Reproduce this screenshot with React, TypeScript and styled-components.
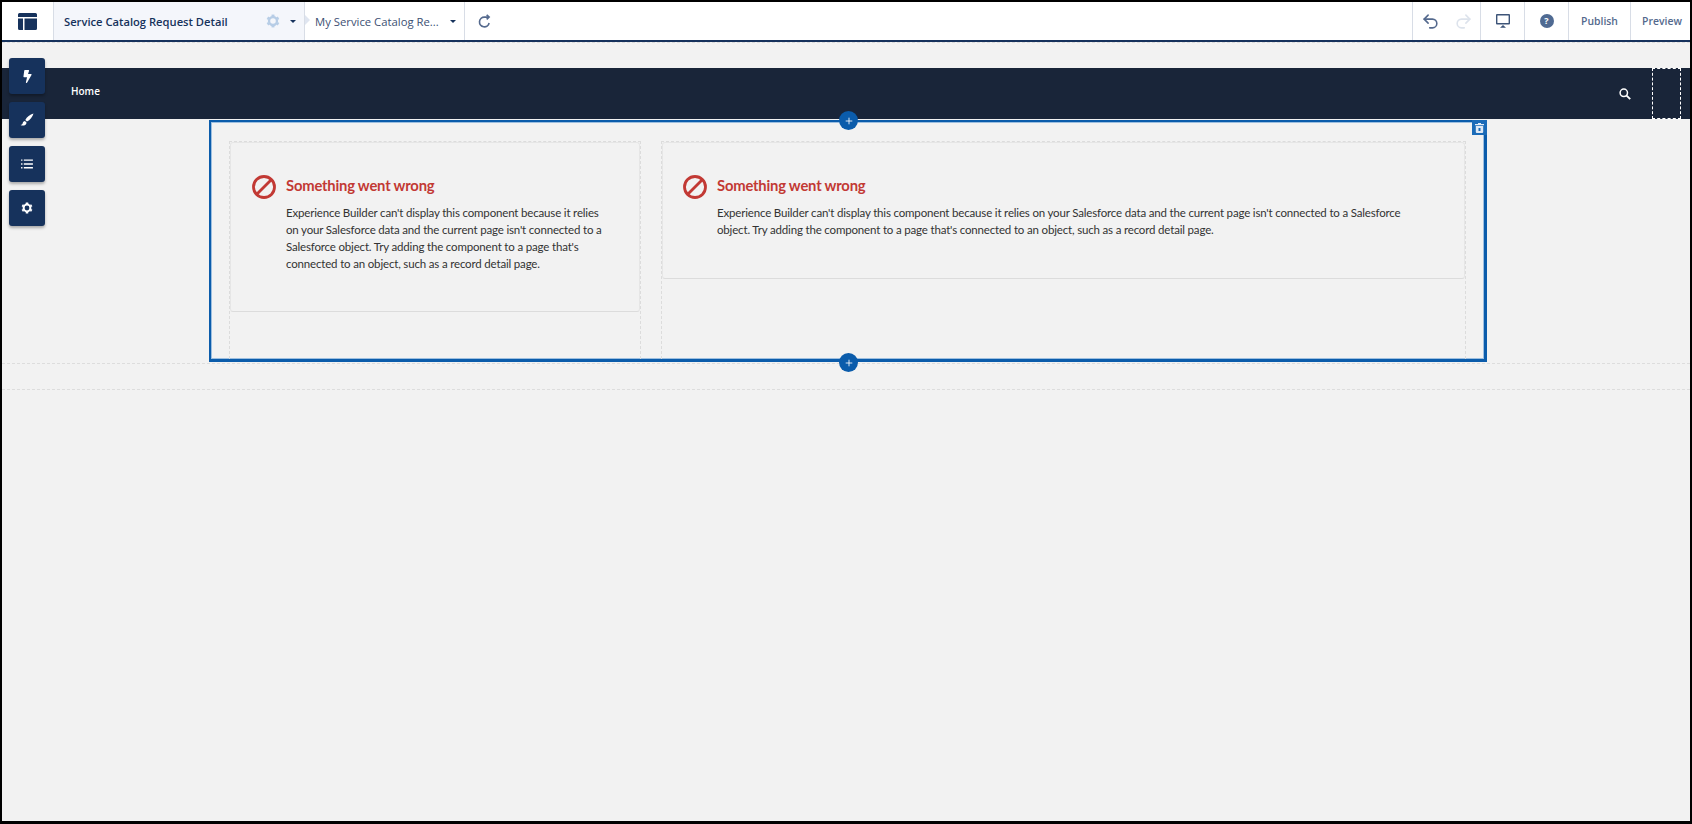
import styled, { createGlobalStyle } from 'styled-components';
import { Plus, Redo2, Undo2 } from 'lucide-react';
import { FaBolt } from 'react-icons/fa';

const GlobalStyle = createGlobalStyle`
  html, body {
    margin: 0;
    padding: 0;
    background: #000;
  }
  * {
    box-sizing: border-box;
  }
`;

const MESSAGE =
  "Experience Builder can't display this component because it relies on your Salesforce data and the current page isn't connected to a Salesforce object. Try adding the component to a page that's connected to an object, such as a record detail page.";

const GEAR_TEETH = [0, 60, 120, 180, 240, 300];

const App = () => (
  <>
    <GlobalStyle />
    <Frame>
      <TopBar>
        <LogoCell>
          <svg width="19" height="17" viewBox="0 0 19 17" aria-hidden="true">
            <path
              d="M1.5 0h16A1.5 1.5 0 0 1 19 1.5V4H0V1.500A1.500 1.500 0 0 1 1.500 0zM0 5.500h5V17H1.500A1.500 1.500 0 0 1 0 15.500zM6.500 5.500H19v10a1.500 1.500 0 0 1-1.500 1.500H6.500z"
              fill="#16325c"
            />
          </svg>
        </LogoCell>
        <PageTab>
          <PageName>Service Catalog Request Detail</PageName>
          <TabGear>
            <GearIcon size={14} color="#b7cde6" />
          </TabGear>
          <Caret />
        </PageTab>
        <SecondTab>
          <SecondName>My Service Catalog Re...</SecondName>
          <Caret />
        </SecondTab>
        <RefreshCell>
          <svg width="13" height="14" viewBox="0 0 15 15" fill="none" stroke="#54698d" strokeWidth="1.900" aria-hidden="true">
            <path d="M12.800 9.800A5.600 5.600 0 1 1 7.500 3h5" />
            <path d="M10 .500 12.800 3 10 5.600" />
          </svg>
        </RefreshCell>
        <Spacer />
        <HistoryCell>
          <Undo2 size={19} strokeWidth={2} color="#54698d" />
          <Redo2 size={19} strokeWidth={2} color="#dde3ec" />
        </HistoryCell>
        <IconCell>
          <svg width="14" height="14" viewBox="0 0 14 14" aria-hidden="true">
            <path
              d="M1 0h12a1 1 0 0 1 1 1v8.500a1 1 0 0 1-1 1H1a1 1 0 0 1-1-1V1a1 1 0 0 1 1-1zm.4 1.400v7.700h11.200V1.400zM7 11l3 2.800H4z"
              fill="#3d5478"
              fillRule="evenodd"
            />
          </svg>
        </IconCell>
        <IconCell>
          <HelpDot>?</HelpDot>
        </IconCell>
        <ActionCell $width={62}>Publish</ActionCell>
        <ActionCell $width={59} $last>
          Preview
        </ActionCell>
      </TopBar>

      <Stage>
        <SideTools>
          <ToolButton>
            <FaBolt size={13} color="#fff" />
          </ToolButton>
          <ToolButton>
            <svg width="14" height="14" viewBox="0 0 14 14" aria-hidden="true">
              <path d="M13.500.500C10 1.500 6.800 4 5.300 7l1.700 1.600C10 7 12.500 4 13.500.500zM4.600 7.900c-1.500.4-1.700 1.500-2 2.500-.2.800-.9 1.300-2.100 1.600 1.800 1 4.600.8 5.600-.9.500-.8.400-1.500.1-2z" fill="#fff" />
            </svg>
          </ToolButton>
          <ToolButton>
            <svg width="12" height="10" viewBox="0 0 13 11" aria-hidden="true">
              <path d="M0 .500h1.500V2H0zM3 .500h10V2H3zM0 4.700h1.500v1.500H0zM3 4.700h10v1.500H3zM0 8.900h1.500v1.500H0zM3 8.900h10v1.500H3z" fill="#fff" />
            </svg>
          </ToolButton>
          <ToolButton>
            <GearIcon size={12} color="#fff" />
          </ToolButton>
        </SideTools>

        <NavBar>
          <NavLink>Home</NavLink>
          <NavEnd>
            <svg width="12" height="12" viewBox="0 0 12 12" fill="none" stroke="#fff" aria-hidden="true">
              <circle cx="4.800" cy="4.800" r="3.700" strokeWidth="1.500" />
              <path d="m7.600 7.600 3.600 3.600" strokeWidth="1.900" />
            </svg>
            <ProfileSlot />
          </NavEnd>
        </NavBar>

        <Section>
          <AddButton $edge="top">
            <Plus size={10} strokeWidth={2} />
          </AddButton>
          <DeleteTab>
            <svg width="9" height="10" viewBox="0 0 9 10" aria-hidden="true">
              <path
                d="M3 0h3v1h3v1.200H0V1h3zM.8 3h7.400v6a1 1 0 0 1-1 1H1.800a1 1 0 0 1-1-1zm2.700 2v3h2V5z"
                fill="#dfe9f5"
                fillRule="evenodd"
              />
            </svg>
          </DeleteTab>
          <Column $width={412}>
            <ErrorCard $height={170} $pad={21}>
              <StopIcon />
              <ErrorText>
                <ErrorTitle>Something went wrong</ErrorTitle>
                <ErrorBody>{MESSAGE}</ErrorBody>
              </ErrorText>
            </ErrorCard>
          </Column>
          <Column $width={805}>
            <ErrorCard $height={137} $pad={20}>
              <StopIcon />
              <ErrorText>
                <ErrorTitle>Something went wrong</ErrorTitle>
                <ErrorBody>{MESSAGE}</ErrorBody>
              </ErrorText>
            </ErrorCard>
          </Column>
          <AddButton $edge="bottom">
            <Plus size={10} strokeWidth={2} />
          </AddButton>
        </Section>

        <EmptyRegion />
      </Stage>
    </Frame>
  </>
);

const GearIcon = ({ size, color }: { size: number; color: string }) => (
  <svg width={size} height={size} viewBox="0 0 24 24" fill="none" stroke={color} aria-hidden="true">
    <circle cx="12" cy="12" r="6.800" strokeWidth="4" />
    {GEAR_TEETH.map((angle) => (
      <path key={angle} d="M12 4V1" strokeWidth="5" transform={`rotate(${angle} 12 12)`} />
    ))}
  </svg>
);

const StopIcon = () => (
  <StopSvg viewBox="0 0 24 24" aria-hidden="true">
    <circle cx="12" cy="12" r="10.500" fill="none" stroke="#c23934" strokeWidth="2.800" />
    <path d="M5 19 19 5" stroke="#c23934" strokeWidth="2.800" />
  </StopSvg>
);

const Frame = styled.div`
  width: 1692px;
  height: 824px;
  border: 2px solid #000;
  border-bottom-width: 3px;
  background: #f2f2f2;
  overflow: hidden;
  display: flex;
  flex-direction: column;
`;

const TopBar = styled.header`
  height: 40px;
  flex: none;
  display: flex;
  align-items: stretch;
  background: #fff;
  border-bottom: 2px solid #16325c;
  font-family: 'Open Sans', 'Liberation Sans', sans-serif;
`;

const Cell = styled.div`
  display: flex;
  align-items: center;
  justify-content: center;
  border-right: 1px solid #d8dde6;
`;

const LogoCell = styled(Cell)`
  width: 52px;
`;

const PageTab = styled(Cell)`
  position: relative;
  width: 251px;
  padding: 0 8px 0 10px;
  background: #f4f6fb;
  justify-content: flex-start;

  &::after {
    content: '';
    position: absolute;
    right: -6px;
    top: 13px;
    border-left: 5px solid #dfe5f0;
    border-top: 5px solid transparent;
    border-bottom: 5px solid transparent;
  }
`;

const PageName = styled.span`
  font-size: 11.200px;
  font-weight: 600;
  color: #16325c;
  white-space: nowrap;
`;

const TabGear = styled.span`
  display: flex;
  margin-left: auto;
  margin-right: 10px;
`;

const Caret = styled.span`
  width: 0;
  height: 0;
  border-top: 3px solid #16325c;
  border-left: 3.500px solid transparent;
  border-right: 3.500px solid transparent;
`;

const SecondTab = styled(Cell)`
  width: 160px;
  padding: 0 8px 0 10px;
  justify-content: space-between;
`;

const SecondName = styled.span`
  font-size: 11.300px;
  color: #3c5073;
  white-space: nowrap;
`;

const RefreshCell = styled.div`
  width: 42px;
  padding-right: 3px;
  display: flex;
  align-items: center;
  justify-content: center;
`;

const Spacer = styled.div`
  flex: 1;
  border-right: 1px solid #d8dde6;
`;

const HistoryCell = styled(Cell)`
  width: 68px;
  gap: 14px;
`;

const IconCell = styled(Cell)`
  width: 44px;
`;

const HelpDot = styled.span`
  width: 14px;
  height: 14px;
  border-radius: 50%;
  background: #4f6a92;
  color: #fff;
  font-size: 9px;
  font-weight: 700;
  line-height: 14px;
  text-align: center;
`;

const ActionCell = styled(Cell)<{ $width: number; $last?: boolean }>`
  width: ${({ $width }) => $width}px;
  padding-left: ${({ $last }) => ($last ? 3 : 0)}px;
  font-size: 10.400px;
  font-weight: 600;
  color: #54698d;
  border-right: ${({ $last }) => ($last ? 'none' : '1px solid #d8dde6')};
`;

const Stage = styled.main`
  position: relative;
  flex: 1;
  padding-top: 25px;
  border-top: 1px dashed #dddddd;
`;

const SideTools = styled.nav`
  position: absolute;
  left: 7px;
  top: 15px;
  z-index: 3;
  display: flex;
  flex-direction: column;
  gap: 8px;
`;

const ToolButton = styled.button`
  width: 36px;
  height: 36px;
  padding: 0;
  border: none;
  border-radius: 3px;
  background: #16325c;
  box-shadow: 0 2px 3px rgba(0, 0, 0, 0.3);
  display: flex;
  align-items: center;
  justify-content: center;
`;

const NavBar = styled.div`
  height: 51px;
  background: #192539;
  display: flex;
  align-items: center;
  justify-content: space-between;
  padding: 0 9px 0 69px;
  font-family: 'Open Sans', 'Liberation Sans', sans-serif;
`;

const NavLink = styled.span`
  font-size: 10px;
  font-weight: 600;
  color: #fff;
  margin-top: -6px;
`;

const NavEnd = styled.div`
  display: flex;
  align-items: center;
  height: 100%;
  gap: 21px;
`;

const ProfileSlot = styled.div`
  width: 29px;
  height: 100%;
  border: 1px dashed #fff;
`;

const Section = styled.section`
  position: relative;
  width: 1278px;
  height: 242px;
  margin: 1px 0 0 207px;
  padding: 19px 18px 0;
  display: flex;
  gap: 20px;
  border: solid #0b5cab;
  border-width: 2px 3px 3px 2px;
  box-shadow: inset 0 0 0 1px #9dbfe0;
  font-family: Lato, 'Open Sans', sans-serif;
`;

const AddButton = styled.button<{ $edge: 'top' | 'bottom' }>`
  position: absolute;
  left: 628px;
  ${({ $edge }) => ($edge === 'top' ? 'top: -11px;' : 'bottom: -13px;')}
  z-index: 2;
  width: 19px;
  height: 19px;
  padding: 0;
  border: none;
  border-radius: 50%;
  background: #0b5cab;
  color: #fff;
  display: flex;
  align-items: center;
  justify-content: center;
`;

const DeleteTab = styled.div`
  position: absolute;
  top: -2px;
  right: -3px;
  width: 15px;
  height: 15px;
  background: #1b6bb8;
  display: flex;
  align-items: center;
  justify-content: center;
`;

const Column = styled.div<{ $width: number }>`
  width: ${({ $width }) => $width}px;
  flex: none;
  border: 1px dashed #dcdcdc;
  border-bottom: none;
`;

const ErrorCard = styled.article<{ $height: number; $pad: number }>`
  height: ${({ $height }) => $height}px;
  padding: 32px 36px 0 ${({ $pad }) => $pad}px;
  display: flex;
  gap: 10px;
  border: 1px solid #e6e6e6;
  border-bottom-color: #dcdcdc;
  border-radius: 3px;
`;

const StopSvg = styled.svg`
  width: 24px;
  height: 24px;
  flex: none;
`;

const ErrorText = styled.div`
  display: flex;
  flex-direction: column;
  gap: 7px;
`;

const ErrorTitle = styled.h2`
  margin: -2px 0 0;
  font-size: 14.800px;
  font-weight: 700;
  letter-spacing: -0.2px;
  line-height: 24px;
  color: #c23934;
`;

const ErrorBody = styled.p`
  margin: 0;
  font-size: 11.500px;
  letter-spacing: -0.17px;
  line-height: 17px;
  color: #333333;
`;

const EmptyRegion = styled.div`
  height: 27px;
  margin-top: 1px;
  border-top: 1px dashed #dddddd;
  border-bottom: 1px dashed #dddddd;
`;

export default App;
